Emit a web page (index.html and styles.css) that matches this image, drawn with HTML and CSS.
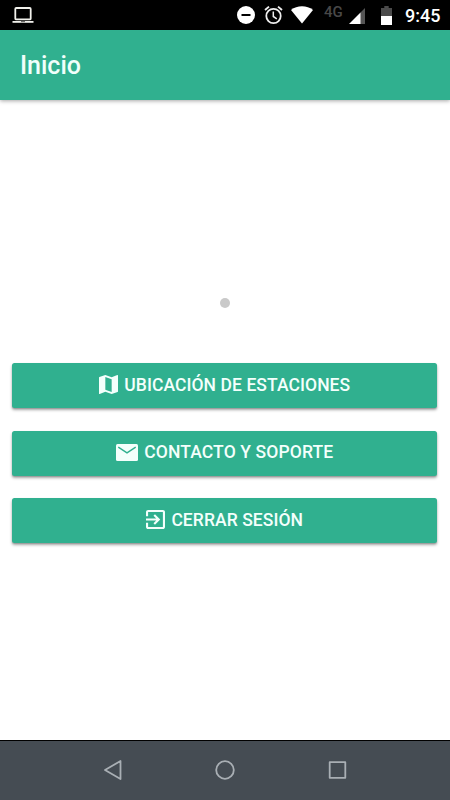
FILE: index.html
```html
<!DOCTYPE html>
<html lang="es">
<head>
<meta charset="utf-8">
<title>Inicio</title>
<link rel="stylesheet" href="styles.css">
</head>
<body>
<div class="status">
  <svg class="laptop" width="22" height="18" viewBox="0 0 22 18"><rect x="3.3" y="2" width="15.4" height="11.4" rx="1" fill="none" stroke="#f1f1ec" stroke-width="1.8"/><path d="M0.5 15h21v1.8h-21z" fill="#f1f1ec"/><path d="M9 15.3h4v.8H9z" fill="#333"/></svg>
  <svg class="dnd" width="18" height="18" viewBox="0 0 18 18"><circle cx="9" cy="9" r="9" fill="#fff"/><path d="M4.5 8h9v2h-9z" fill="#000"/></svg>
  <svg class="alarm" width="19" height="20" viewBox="0 0 19 20" fill="none" stroke="#eee"><circle cx="9.5" cy="11" r="7.2" stroke-width="1.8"/><path d="M1 5l4-3.4M18 5l-4-3.4" stroke-width="1.9"/><path d="M9.3 6.5v5l3.5 2.3" stroke-width="1.5"/></svg>
  <svg class="wifi" width="22" height="18" viewBox="0 0 22 18"><path d="M0 4C6-1 16-1 22 4L11 17.5z" fill="#fff"/></svg>
  <span class="network">4G</span>
  <svg class="signal" width="16" height="16" viewBox="0 0 16 16"><path d="M11 5L16 0v16h-5z" fill="#555"/><path d="M0 16L11.5 4.5V16z" fill="#fff"/></svg>
  <svg class="battery" width="11" height="19" viewBox="0 0 11 19"><path d="M3.3 0h4.4v2H11v8H0V2h3.3z" fill="#4b4b4b"/><path d="M0 10h11v9H0z" fill="#fff"/></svg>
  <span class="time">9:45</span>
</div>
<header class="toolbar"><h1>Inicio</h1></header>
<main class="content">
  <div class="dot"></div>
  <button class="btn"><svg width="19" height="19" viewBox="3 3 18 18"><path fill="currentColor" d="M20.5 3l-.16.03L15 5.1 9 3 3.36 4.9c-.21.07-.36.25-.36.48V20.5c0 .28.22.5.5.5l.16-.03L9 18.9l6 2.1 5.64-1.9c.21-.07.36-.25.36-.48V3.5c0-.28-.22-.5-.5-.5zM15 19l-6-2.11V5l6 2.11V19z"/></svg><span>UBICACIÓN DE ESTACIONES</span></button>
  <button class="btn btn-mail"><svg width="22" height="17" viewBox="0 0 22 17"><rect width="22" height="17" rx="1.5" fill="currentColor"/><path d="M2.3 3.2L11 8.8l8.7-5.6" fill="none" stroke="#30b08f" stroke-width="1.4"/></svg><span>CONTACTO Y SOPORTE</span></button>
  <button class="btn"><svg width="19" height="19" viewBox="3 3 18 18"><path fill="currentColor" d="M10.09 15.59L11.5 17l5-5-5-5-1.41 1.41L12.67 11H3v2h9.67l-2.58 2.59zM19 3H5c-1.11 0-2 .9-2 2v4h2V5h14v14H5v-4H3v4c0 1.1.89 2 2 2h14c1.1 0 2-.9 2-2V5c0-1.1-.9-2-2-2z"/></svg><span>CERRAR SESIÓN</span></button>
</main>
<nav class="navbar">
  <svg width="20" height="22" viewBox="0 0 20 22"><path d="M17.5 2v18L2 11z"/></svg>
  <svg width="20" height="22" viewBox="0 0 20 22"><circle cx="10" cy="11" r="8.8"/></svg>
  <svg width="20" height="22" viewBox="0 0 20 22"><rect x="1.7" y="3.2" width="15.6" height="15.6"/></svg>
</nav>
</body>
</html>
```

FILE: styles.css
```css
* { box-sizing: border-box; }
body {
  margin: 0;
  width: 450px;
  height: 800px;
  display: flex;
  flex-direction: column;
  overflow: hidden;
  background: #fff;
  font-family: Roboto, "Liberation Sans", sans-serif;
}
svg { display: block; flex: none; }
.status {
  height: 30px;
  flex: none;
  display: flex;
  align-items: flex-start;
  padding-left: 12px;
  background: #000;
}
.laptop { margin-top: 6px; }
.dnd { margin: 6px 0 0 203px; }
.alarm { margin: 5px 0 0 9px; }
.wifi { margin: 6px 0 0 8px; }
.network {
  width: 25px;
  margin-left: 10px;
  padding-left: 1px;
  margin-top: 3px;
  font-size: 15px;
  line-height: 18px;
  font-weight: 500;
  color: #484848;
}
.signal { margin: 8px 0 0 1px; }
.battery { margin: 6px 0 0 16px; }
.time {
  margin: 5px 0 0 13px;
  font-size: 18px;
  line-height: 22px;
  font-weight: 500;
  color: #fff;
}
.toolbar {
  height: 70px;
  flex: none;
  display: flex;
  align-items: center;
  padding: 2px 0 0 20px;
  background: #30b08f;
  box-shadow: 0 1px 4px rgba(0, 0, 0, .35);
}
.toolbar h1 {
  margin: 0;
  font-size: 25px;
  line-height: 30px;
  font-weight: 500;
  color: #f0fffb;
}
.content {
  flex: 1;
  display: flex;
  flex-direction: column;
  gap: 22.5px;
  padding: 198px 13px 0 12px;
}
.dot {
  width: 10px;
  height: 10px;
  margin: 0 auto 32.5px;
  border-radius: 50%;
  background: #c9c9c9;
}
.btn {
  height: 45px;
  flex: none;
  display: flex;
  align-items: center;
  justify-content: center;
  gap: 6.5px;
  padding: 0 0 2px;
  border: 0;
  border-radius: 2.5px;
  background: #30b08f;
  box-shadow: 0 2px 3px rgba(0, 0, 0, .35), 0 1px 1px rgba(0, 0, 0, .12);
  font: 500 17.5px/22px Roboto, "Liberation Sans", sans-serif;
  letter-spacing: .07px;
  color: #f4fffc;
}
.btn-mail {
  gap: 6.5px;
  padding-bottom: 2px;
  letter-spacing: .12px;
}
.navbar {
  height: 60px;
  flex: none;
  display: flex;
  align-items: center;
  justify-content: center;
  gap: 92.5px;
  padding-bottom: 2px;
  border-top: 1px solid #000;
  background: #454c53;
}
.navbar svg {
  fill: none;
  stroke: #a9afb4;
  stroke-width: 1.8;
  stroke-linejoin: round;
}
```
